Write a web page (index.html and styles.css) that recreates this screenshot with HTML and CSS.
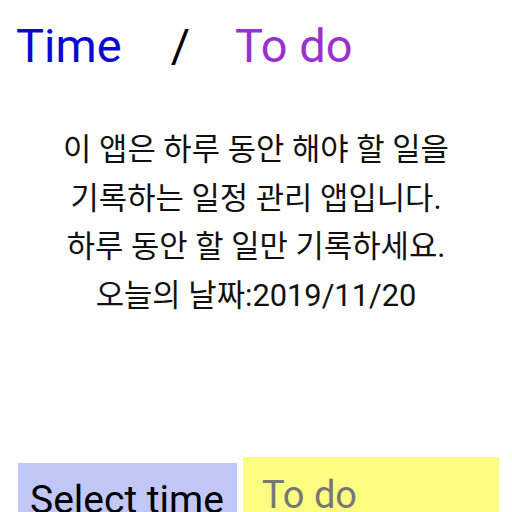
FILE: index.html
```html
<!DOCTYPE html>
<html lang="ko">
<head>
<meta charset="utf-8">
<title>Time / To do</title>
<link rel="stylesheet" href="styles.css">
</head>
<body>
<div class="title">
  <span class="t-time">Time</span>
  <span class="t-slash">/</span>
  <span class="t-todo">To do</span>
</div>
<div class="intro">
  <p>이 앱은 하루 동안 해야 할 일을</p>
  <p>기록하는 일정 관리 앱입니다.</p>
  <p>하루 동안 할 일만 기록하세요.</p>
  <p>오늘의 날짜:2019/11/20</p>
</div>
<div class="inputs">
  <div class="select-box">Select time</div>
  <div class="todo-box">To do</div>
</div>
</body>
</html>
```
FILE: styles.css
```css
html, body {
  margin: 0;
  padding: 0;
  background: #ffffff;
  overflow: hidden;
}
body {
  width: 512px;
  font-family: Roboto, "Noto Sans CJK KR", sans-serif;
}
.title {
  display: flex;
  padding: 18px 0 0 16px;
  font-size: 47px;
  line-height: 56px;
  height: 56px;
}
.t-time { color: #0a0acf; }
.t-slash { color: #000; margin-left: 49px; }
.t-todo { color: #9932cc; margin-left: 45px; }
.intro {
  margin-top: 52px;
  text-align: center;
  font-size: 30.8px;
  line-height: 48.7px;
  color: #111;
}
.intro p { margin: 0; }
.inputs {
  display: flex;
  gap: 6px;
  margin: 136px 13px 0 18px;
  align-items: flex-start;
}
.select-box {
  margin-top: 6px;
  width: 219px;
  height: 80px;
  background: #c1c8f7;
  color: #000;
  font-size: 39px;
  padding: 14px 0 0 12px;
  box-sizing: border-box;
  line-height: 46px;
}
.todo-box {
  flex: 1;
  height: 80px;
  background: #fdfd82;
  color: #777777;
  font-size: 38px;
  padding: 15px 0 0 19px;
  box-sizing: border-box;
  line-height: 46px;
}
```
